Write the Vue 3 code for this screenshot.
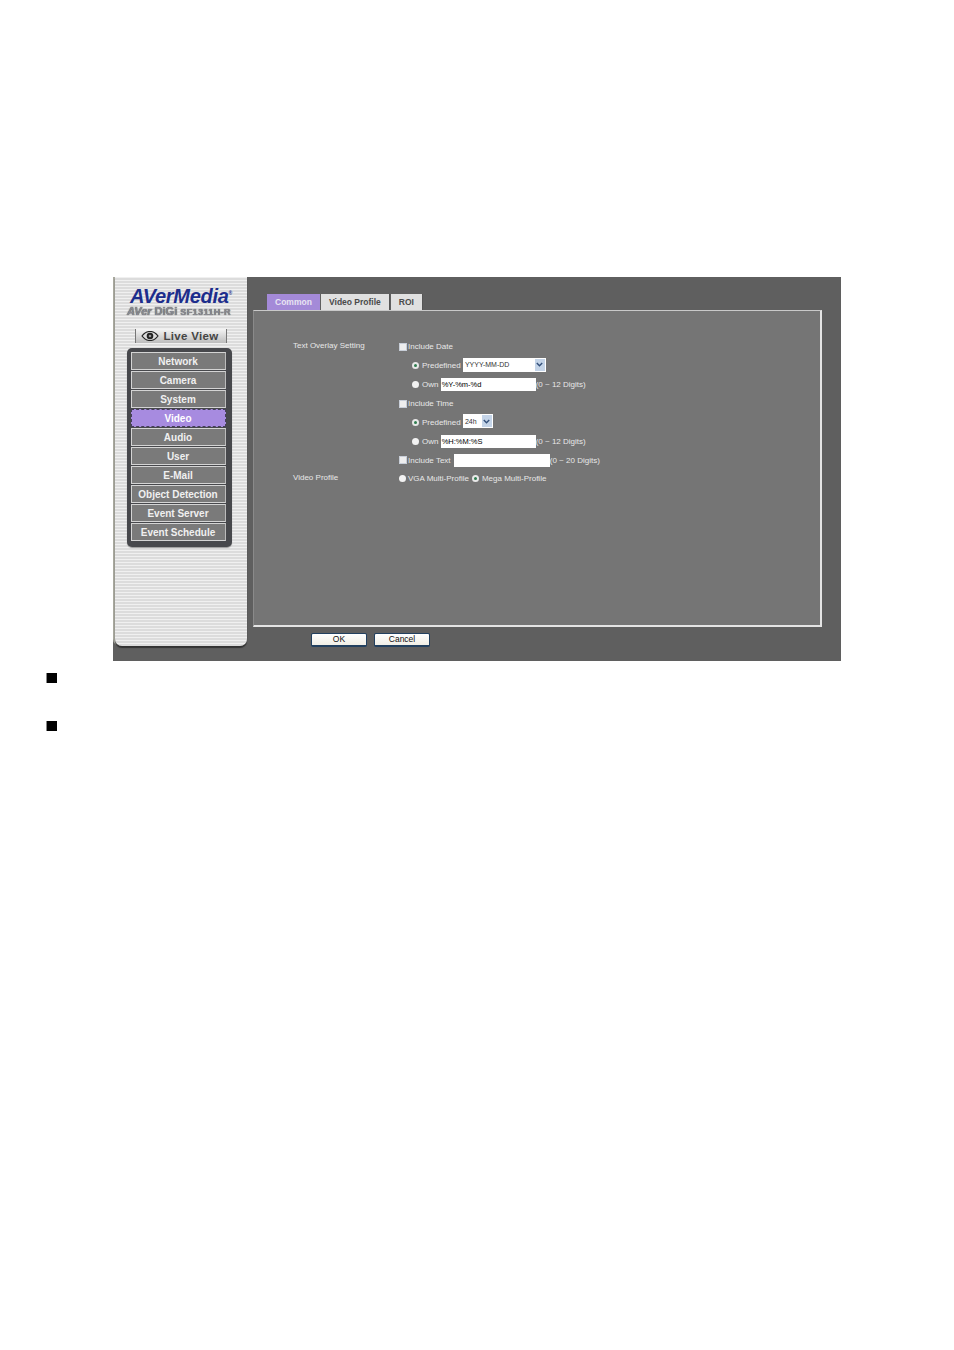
<script setup>
const menu = ['Network', 'Camera', 'System', 'Video', 'Audio', 'User', 'E-Mail', 'Object Detection', 'Event Server', 'Event Schedule']
const tabs = ['Common', 'Video Profile', 'ROI']
</script>

<template>
  <div class="page">
    <div class="shot">
      <aside class="sidebar">
        <div class="logo">AVerMedia<sup>®</sup></div>
        <div class="model"><i>AVer</i> DiGi <span>SF1311H-R</span></div>
        <div class="live">
          <svg width="18" height="10" viewBox="0 0 18 10">
            <path d="M1 5C4 1 6.500 .5 9 .5S14 1 17 5C14 9 11.500 9.500 9 9.500S4 9 1 5Z" fill="#ddd" stroke="#222" stroke-width="1.200" />
            <circle cx="9" cy="5" r="3.300" fill="#222" />
            <circle cx="9" cy="5" r="1.300" fill="#999" />
          </svg>
          <span>Live View</span>
        </div>
        <nav class="menu">
          <div v-for="item in menu" :key="item" class="menu-item" :class="{ active: item === 'Video' }">{{ item }}</div>
        </nav>
      </aside>

      <main class="content">
        <div class="tabs">
          <div v-for="tab in tabs" :key="tab" class="tab" :class="{ current: tab === 'Common' }">{{ tab }}</div>
        </div>
        <section class="panel">
          <div class="form">
            <div class="label">Text Overlay Setting</div>
            <div class="row"><span class="check"></span>Include Date</div>

            <div class="row sub"><span class="radio on"></span>Predefined <span class="select wide"><b>YYYY-MM-DD</b><em><svg width="7" height="5" viewBox="0 0 7 5"><path d="M.8 1 3.500 3.800 6.200 1" fill="none" stroke="#33507a" stroke-width="1.400" /></svg></em></span></div>
            <div class="row sub"><span class="radio"></span>Own <span class="input own">%Y-%m-%d</span>(0 ~ 12 Digits)</div>

            <div class="row"><span class="check"></span>Include Time</div>
            <div class="row sub"><span class="radio on"></span>Predefined <span class="select narrow"><b>24h</b><em><svg width="7" height="5" viewBox="0 0 7 5"><path d="M.8 1 3.500 3.800 6.200 1" fill="none" stroke="#33507a" stroke-width="1.400" /></svg></em></span></div>
            <div class="row sub"><span class="radio"></span>Own <span class="input own">%H:%M:%S</span>(0 ~ 12 Digits)</div>

            <div class="row"><span class="check"></span>Include Text <span class="input text"></span>(0 ~ 20 Digits)</div>

            <div class="label">Video Profile</div>
            <div class="row tight"><span class="radio"></span>VGA Multi-Profile<span class="radio on second"></span>Mega Multi-Profile</div>
          </div>
        </section>
        <div class="buttons">
          <button class="btn">OK</button>
          <button class="btn">Cancel</button>
        </div>
      </main>
    </div>

    <div class="bullet first"></div>
    <div class="bullet"></div>
  </div>
</template>

<style>
body {
  margin: 0;
  background: #fff;
}
</style>

<style scoped>
.page {
  height: 1350px;
  padding-top: 277px;
  box-sizing: border-box;
  font-family: "Liberation Sans", Arial, sans-serif;
}
.shot {
  width: 728px;
  height: 384px;
  margin-left: 113px;
  background: #5f5f5f;
  display: flex;
}
.sidebar {
  width: 132px;
  height: 369px;
  margin-left: 2px;
  box-sizing: border-box;
  padding-top: 10px;
  background: repeating-linear-gradient(#f0f0f0 0 1px, #dcdcdc 1px 3px);
  border-radius: 0 0 7px 7px;
  box-shadow: 0 2px 1px #333, -2px 0 0 #a8a89e;
  display: flex;
  flex-direction: column;
  align-items: center;
}
.logo {
  height: 19px;
  font-size: 20px;
  line-height: 19px;
  font-weight: bold;
  font-style: italic;
  color: #1c2d8c;
  white-space: nowrap;
  letter-spacing: -0.3px;
}
.logo sup {
  font-size: 5px;
  font-style: normal;
  line-height: 0;
}
.model {
  height: 11px;
  margin-right: 4px;
  font-size: 11px;
  line-height: 11px;
  font-weight: bold;
  color: #8a8a92;
  text-shadow: 0 0 1px #333;
  white-space: nowrap;
}
.model span {
  font-size: 9px;
  letter-spacing: .4px;
}
.live {
  width: 92px;
  height: 14px;
  margin-top: 12px;
  margin-right: 1px;
  box-sizing: border-box;
  padding-right: 2px;
  display: flex;
  align-items: center;
  justify-content: center;
  gap: 5px;
  font-size: 11.500px;
  font-weight: bold;
  color: #444;
  letter-spacing: .3px;
  background: linear-gradient(#f4f4f4, #bdbdbd);
  border-left: 1px solid #777;
  border-right: 1px solid #777;
}
.menu {
  width: 105px;
  height: 199px;
  margin-top: 5px;
  margin-right: 4px;
  box-sizing: border-box;
  padding: 4px 6px 0 4px;
  background: #47484c;
  border-radius: 5px;
  box-shadow: 0 1px 1px #999;
  display: flex;
  flex-direction: column;
  gap: 1px;
}
.menu-item {
  height: 18px;
  flex: none;
  box-sizing: border-box;
  border: 1px solid #d4d4d4;
  border-right-color: #bbb;
  background: #7a7a7a;
  color: #f0f0f0;
  font-size: 10px;
  font-weight: bold;
  line-height: 17px;
  text-align: center;
  white-space: nowrap;
}
.menu-item.active {
  background: #a78be0;
  border: 1px dashed #45405a;
  color: #fff;
}
.content {
  flex: 1;
  padding-left: 6px;
  padding-top: 17px;
  min-width: 0;
}
.tabs {
  display: flex;
  gap: 1px;
  margin-left: 14px;
  height: 16px;
}
.tab {
  box-sizing: border-box;
  height: 16px;
  padding: 0 8px;
  background: #e0e0e0;
  color: #4a4a4a;
  font-size: 8.500px;
  font-weight: bold;
  line-height: 17px;
  border-right: 1px solid #555;
  white-space: nowrap;
}
.tab.current {
  width: 53px;
  background: #a48ad8;
  color: #e8e4f2;
  border-right: 0;
}
.panel {
  width: 569px;
  height: 317px;
  box-sizing: border-box;
  background: #757575;
  border: 1px solid #c9c9c9;
  border-left-color: #8a8a8a;
  border-right: 2px solid #e4e4e4;
  border-bottom: 2px solid #e4e4e4;
  padding-top: 26px;
  padding-left: 39px;
  color: #e8e8e8;
  font-size: 8px;
}
.form {
  display: grid;
  grid-template-columns: 106px 1fr;
  grid-auto-rows: 18.860px;
}
.label {
  grid-column: 1;
  padding-top: 1.500px;
  line-height: 14px;
  white-space: nowrap;
}
.row {
  grid-column: 2;
  display: flex;
  align-items: center;
  white-space: pre;
  padding-top: 1px;
}
.row.sub {
  padding-left: 13px;
}
.check {
  width: 8px;
  height: 8px;
  flex: none;
  margin-right: 1px;
  background: #eeeeee;
  box-shadow: inset 0 0 0 1px #c8ced8;
}
.radio {
  width: 7px;
  height: 7px;
  flex: none;
  margin-right: 3px;
  border-radius: 50%;
  background: #f2f2f2;
}
.row.tight .radio {
  margin-right: 2px;
}
.radio.on {
  box-sizing: border-box;
  background: #2f7d4f;
  border: 2px solid #e8e8e8;
}
.row.tight .radio.second {
  margin-left: 3px;
  margin-right: 3px;
}
.select {
  height: 14px;
  margin-top: -2px;
  box-sizing: border-box;
  background: #fff;
  display: flex;
  align-items: center;
  justify-content: space-between;
  color: #333;
}
.select b {
  font-weight: normal;
  padding-left: 2px;
  font-size: 7px;
}
.select em {
  width: 10px;
  height: 12px;
  margin-right: 1px;
  background: #c4d4e8;
  display: flex;
  align-items: center;
  justify-content: center;
}
.select.wide {
  width: 83px;
}
.select.narrow {
  width: 30px;
}
.input {
  height: 13px;
  box-sizing: border-box;
  background: #fff;
  color: #000;
  font-size: 7.500px;
  line-height: 13px;
  padding-left: 1px;
}
.input.own {
  width: 95px;
}
.input.text {
  width: 96px;
  margin-left: 1px;
}
.buttons {
  display: flex;
  gap: 7px;
  margin-left: 58px;
  margin-top: 6px;
}
.btn {
  width: 56px;
  height: 14px;
  padding: 0;
  box-sizing: border-box;
  border: 1px solid #22405f;
  border-width: 1px 1px 2px;
  border-radius: 2px;
  background: linear-gradient(#ffffff, #f1efe6);
  color: #111;
  font-family: inherit;
  font-size: 8.500px;
  line-height: 11px;
}
.bullet {
  width: 10px;
  height: 10px;
  margin-left: 47px;
  margin-top: 38px;
  background: #000;
  box-shadow: -1px 0 0 #888;
}
.bullet.first {
  margin-top: 12px;
}
</style>
